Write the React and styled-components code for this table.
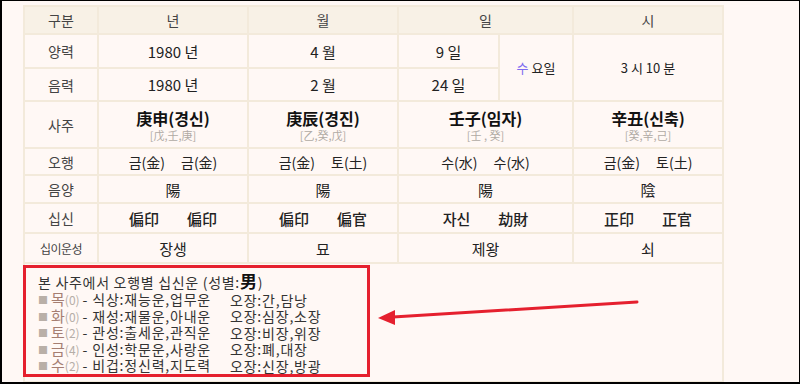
import React from "react";
import styled, { createGlobalStyle } from "styled-components";

const GlobalStyle = createGlobalStyle`
  html, body { margin: 0; padding: 0; background: #fff8f5; }
  body { font-family: "Noto Sans CJK KR", "Noto Sans", sans-serif; }
`;

const Frame = styled.div`
  box-sizing: border-box;
  width: 800px;
  height: 384px;
  overflow: hidden;
  background: #fff8f5;
  border-style: solid;
  border-color: #000;
  border-width: 1px 1px 2px 2px;
  padding: 4px 0 0 21px;
`;

const SajuTable = styled.table`
  width: 701px;
  table-layout: fixed;
  border-collapse: collapse;
  font-family: "Noto Sans CJK KR", "Noto Sans", sans-serif;
  color: #222;
  & th, & td {
    border: 2px solid #f3eadb;
    padding: 0;
    text-align: center;
    vertical-align: middle;
  }
`;

const Row = styled.tr`
  height: ${(p) => p.$h}px;
`;

const HeadCell = styled.th`
  background: #f8f1e6;
  font-weight: 400;
  font-size: 14px;
  color: #444;
`;

const LabelCell = styled.td`
  font-size: ${(p) => p.$size || 14}px;
  color: #444;
  letter-spacing: ${(p) => (p.$tight ? "-0.5px" : "0")};
`;

const Cell = styled.td`
  font-size: ${(p) => p.$size || 15}px;
  color: #222;
`;

const Weekday = styled.span`
  color: #7f6cf0;
`;

const Pillar = styled.div`
  font-size: 16px;
  font-weight: 700;
  line-height: 20px;
  color: #111;
`;

const Hidden = styled.div`
  font-size: 11px;
  line-height: 14px;
  color: #b0aaa4;
`;

const Pair = styled.span`
  display: inline-flex;
  gap: ${(p) => p.$gap}px;
  font-weight: ${(p) => p.$weight || 400};
`;

const SummaryCell = styled.td`
  position: relative;
  && { text-align: left; vertical-align: top; }
`;

const Highlight = styled.div`
  box-sizing: border-box;
  width: 347px;
  height: 112px;
  margin: 1px 0 0 -2px;
  border: 3px solid #e5202e;
  padding: 4px 0 0 12px;
  overflow: hidden;
`;

const Title = styled.div`
  font-size: 14px;
  line-height: 18px;
  color: #333;
  margin-bottom: 0;
  letter-spacing: 0.7px;
`;

const Gender = styled.b`
  font-size: 17px;
  color: #111;
`;

const ElementRow = styled.div`
  display: grid;
  grid-template-columns: 192px auto;
  height: 16.5px;
  line-height: 16px;
  align-items: center;
  font-size: 14px;
  color: #333;
  white-space: nowrap;
  letter-spacing: 0.8px;
`;

const Bullet = styled.span`
  color: #b9afa7;
  font-size: 10px;
  margin-right: 3px;
  vertical-align: 1px;
  letter-spacing: 0;
`;

const ElementName = styled.span`
  color: #a57e72;
  font-size: 15px;
  line-height: 1;
  letter-spacing: 0;
`;

const Count = styled.span`
  color: #b5aea8;
  font-size: 12px;
  margin-right: 3px;
  letter-spacing: 0;
`;

const Arrow = styled.svg`
  position: absolute;
  left: 0;
  top: 0;
  pointer-events: none;
`;

const elements = [
  ["목", 0, "식상:재능운,업무운", "오장:간,담낭"],
  ["화", 0, "재성:재물운,아내운", "오장:심장,소장"],
  ["토", 2, "관성:출세운,관직운", "오장:비장,위장"],
  ["금", 4, "인성:학문운,사랑운", "오장:폐,대장"],
  ["수", 2, "비겁:정신력,지도력", "오장:신장,방광"],
];

export default function App() {
  return (
    <>
      <GlobalStyle />
      <Frame>
        <SajuTable>
          <colgroup>
            <col style={{ width: 74 }} />
            <col style={{ width: 150 }} />
            <col style={{ width: 150 }} />
            <col style={{ width: 101 }} />
            <col style={{ width: 74 }} />
            <col style={{ width: 150 }} />
          </colgroup>
          <tbody>
            <Row $h={28}>
              <HeadCell>구분</HeadCell>
              <HeadCell>년</HeadCell>
              <HeadCell>월</HeadCell>
              <HeadCell colSpan={2}>일</HeadCell>
              <HeadCell>시</HeadCell>
            </Row>
            <Row $h={34}>
              <LabelCell>양력</LabelCell>
              <Cell>1980 년</Cell>
              <Cell>4 월</Cell>
              <Cell>9 일</Cell>
              <Cell rowSpan={2} $size={13}>
                <Weekday>수</Weekday> 요일
              </Cell>
              <Cell rowSpan={2} $size={13}>3 시 10 분</Cell>
            </Row>
            <Row $h={33}>
              <LabelCell>음력</LabelCell>
              <Cell>1980 년</Cell>
              <Cell>2 월</Cell>
              <Cell>24 일</Cell>
            </Row>
            <Row $h={47}>
              <LabelCell>사주</LabelCell>
              <Cell>
                <Pillar>庚申(경신)</Pillar>
                <Hidden>[戊,壬,庚]</Hidden>
              </Cell>
              <Cell>
                <Pillar>庚辰(경진)</Pillar>
                <Hidden>[乙,癸,戊]</Hidden>
              </Cell>
              <Cell colSpan={2}>
                <Pillar>壬子(임자)</Pillar>
                <Hidden>[壬 , 癸]</Hidden>
              </Cell>
              <Cell>
                <Pillar>辛丑(신축)</Pillar>
                <Hidden>[癸,辛,己]</Hidden>
              </Cell>
            </Row>
            <Row $h={27}>
              <LabelCell>오행</LabelCell>
              <Cell $size={14}><Pair $gap={16}><span>금(金)</span><span>금(金)</span></Pair></Cell>
              <Cell $size={14}><Pair $gap={16}><span>금(金)</span><span>토(土)</span></Pair></Cell>
              <Cell $size={14} colSpan={2}><Pair $gap={16}><span>수(水)</span><span>수(水)</span></Pair></Cell>
              <Cell $size={14}><Pair $gap={16}><span>금(金)</span><span>토(土)</span></Pair></Cell>
            </Row>
            <Row $h={28}>
              <LabelCell>음양</LabelCell>
              <Cell>陽</Cell>
              <Cell>陽</Cell>
              <Cell colSpan={2}>陽</Cell>
              <Cell>陰</Cell>
            </Row>
            <Row $h={30}>
              <LabelCell>십신</LabelCell>
              <Cell><Pair $gap={28} $weight={500}><span>偏印</span><span>偏印</span></Pair></Cell>
              <Cell><Pair $gap={28} $weight={500}><span>偏印</span><span>偏官</span></Pair></Cell>
              <Cell colSpan={2}><Pair $gap={28} $weight={500}><span>자신</span><span>劫財</span></Pair></Cell>
              <Cell><Pair $gap={28} $weight={500}><span>正印</span><span>正官</span></Pair></Cell>
            </Row>
            <Row $h={30}>
              <LabelCell $size={12} $tight>십이운성</LabelCell>
              <Cell>장생</Cell>
              <Cell>묘</Cell>
              <Cell colSpan={2}>제왕</Cell>
              <Cell>쇠</Cell>
            </Row>
            <Row $h={119}>
              <SummaryCell colSpan={6}>
                <Highlight>
                  <Title>
                    본 사주에서 오행별 십신운 (성별:<Gender>男</Gender>)
                  </Title>
                  {elements.map(([name, count, luck, organ]) => (
                    <ElementRow key={name}>
                      <span>
                        <Bullet>■</Bullet>
                        <ElementName>{name}</ElementName>
                        <Count>({count})</Count>- {luck}
                      </span>
                      <span>{organ}</span>
                    </ElementRow>
                  ))}
                </Highlight>
                <Arrow width="700" height="119" viewBox="0 0 700 119">
                  <line x1="612" y1="38" x2="368" y2="53" stroke="#e5202e" strokeWidth="3" strokeLinecap="round" />
                  <polygon points="353,54 370,46 370,61" fill="#e5202e" />
                </Arrow>
              </SummaryCell>
            </Row>
          </tbody>
        </SajuTable>
      </Frame>
    </>
  );
}
